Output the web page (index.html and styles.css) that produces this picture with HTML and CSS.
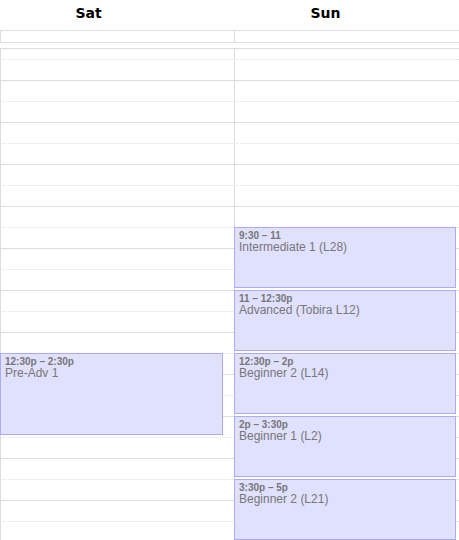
FILE: index.html
```html
<!DOCTYPE html>
<html>
<head>
<meta charset="utf-8">
<link rel="stylesheet" href="styles.css">
</head>
<body>
<div class="cal">
  <div class="head">
    <div class="head-cell">Sat</div>
    <div class="head-cell">Sun</div>
  </div>
  <div class="allday">
    <div class="allday-cell sat"></div>
    <div class="allday-cell"></div>
  </div>
  <div class="divider"></div>
  <div class="body">
    <div class="slots">
      <div class="slot half"></div><div class="slot"></div>
      <div class="slot half"></div><div class="slot"></div>
      <div class="slot half"></div><div class="slot"></div>
      <div class="slot half"></div><div class="slot"></div>
      <div class="slot half"></div><div class="slot"></div>
      <div class="slot half"></div><div class="slot"></div>
      <div class="slot half"></div><div class="slot"></div>
      <div class="slot half"></div><div class="slot"></div>
      <div class="slot half"></div><div class="slot"></div>
      <div class="slot half"></div><div class="slot"></div>
      <div class="slot half"></div><div class="slot"></div>
      <div class="slot half"></div><div class="slot"></div>
      <div class="slot half"></div><div class="slot"></div>
    </div>
    <div class="cols">
      <div class="col sat">
        <div class="event" style="top:304px;height:82px">
          <div class="ev-time">12:30p – 2:30p</div>
          <div class="ev-title">Pre-Adv 1</div>
        </div>
      </div>
      <div class="col sun">
        <div class="event" style="top:178px;height:61px">
          <div class="ev-time">9:30 – 11</div>
          <div class="ev-title">Intermediate 1 (L28)</div>
        </div>
        <div class="event" style="top:241px;height:61px">
          <div class="ev-time">11 – 12:30p</div>
          <div class="ev-title">Advanced (Tobira L12)</div>
        </div>
        <div class="event" style="top:304px;height:61px">
          <div class="ev-time">12:30p – 2p</div>
          <div class="ev-title">Beginner 2 (L14)</div>
        </div>
        <div class="event" style="top:367px;height:61px">
          <div class="ev-time">2p – 3:30p</div>
          <div class="ev-title">Beginner 1 (L2)</div>
        </div>
        <div class="event" style="top:430px;height:61px">
          <div class="ev-time">3:30p – 5p</div>
          <div class="ev-title">Beginner 2 (L21)</div>
        </div>
      </div>
    </div>
  </div>
</div>
</body>
</html>
```

FILE: styles.css
```css
html, body {
  margin: 0;
  padding: 0;
  background: #fff;
  overflow: hidden;
}

.cal {
  width: 459px;
  height: 540px;
  overflow: hidden;
}

.head {
  display: grid;
  grid-template-columns: 177px 297px;
  height: 30px;
}

.head-cell {
  font-family: "DejaVu Sans", Verdana, sans-serif;
  font-weight: bold;
  font-size: 14px;
  line-height: 18px;
  padding-top: 4px;
  text-align: center;
  color: #000;
}

.allday {
  display: grid;
  grid-template-columns: 235px 1fr;
  border-top: 1px solid #ddd;
  border-bottom: 1px solid #ddd;
  height: 11px;
}

.allday-cell.sat {
  border-left: 1px solid #ddd;
  border-right: 1px solid #ddd;
}

.divider {
  height: 5px;
  border-bottom: 1px solid #ddd;
}

.body {
  position: relative;
  height: 491px;
  overflow: hidden;
}

.slots {
  margin-top: -10px;
}

.slot {
  height: 20px;
  border-bottom: 1px solid #ddd;
}

.slot.half {
  border-bottom: 1px dotted #e2e2e2;
}

.cols {
  position: absolute;
  inset: 0;
  display: grid;
  grid-template-columns: 235px 1fr;
}

.col {
  position: relative;
}

.col.sat {
  border-left: 1px solid #ddd;
  border-right: 1px solid #ddd;
}

.event {
  position: absolute;
  left: -1px;
  box-sizing: border-box;
  background: #e0e0ff;
  border: 1px solid #aaf;
  padding: 2px 4px;
  font-family: "Liberation Sans", Arial, sans-serif;
  color: #777;
  overflow: hidden;
}

.col.sat .event {
  right: 11px;
}

.col.sun .event {
  right: 3px;
}

.ev-time {
  font-size: 10px;
  font-weight: bold;
  line-height: 11px;
}

.ev-title {
  font-size: 12px;
  line-height: 12px;
}
```
